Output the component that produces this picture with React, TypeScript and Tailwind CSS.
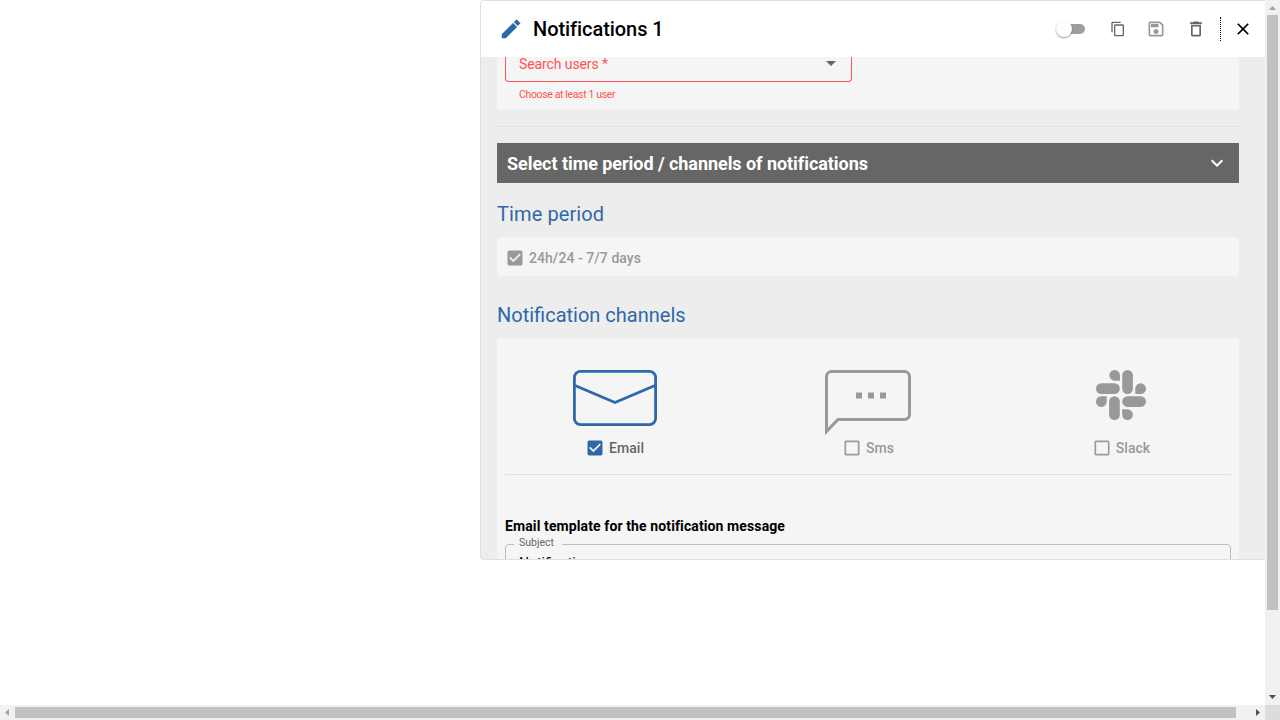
import React from "react";
import {
  MdContentCopy,
  MdOutlineSave,
  MdDeleteOutline,
  MdClose,
  MdArrowDropDown,
  MdExpandMore,
  MdCheckBox,
  MdCheckBoxOutlineBlank,
} from "react-icons/md";

function Header() {
  return (
    <header className="flex h-14 shrink-0 items-center bg-white pl-5">
      <svg className="size-6 -ml-0.5 text-[#2e68aa]" viewBox="0 0 24 24" fill="currentColor" stroke="currentColor" strokeWidth="0.5">
        <path d="M20.710 7.040c.390-.390.390-1.040 0-1.410l-2.340-2.340c-.370-.390-1.020-.390-1.410 0l-1.840 1.830 3.750 3.750M3 17.250V21h3.750L17.810 9.930l-3.750-3.750L3 17.250z" />
      </svg>
      <h1 className="ml-2.5 grow text-[20px] leading-8 font-medium tracking-[-0.06px] whitespace-nowrap text-black">
        Notifications 1
      </h1>
      <div className="flex w-8 items-center">
        <div className="z-10 size-4 shrink-0 rounded-full bg-[#fefefe] shadow-[0_1px_2px_rgba(0,0,0,0.4)]" />
        <div className="-ml-3 h-2.5 w-[25px] rounded-full bg-[#9e9e9e]" />
      </div>
      <MdContentCopy className="ml-[22px] size-4 text-[#666666]" />
      <MdOutlineSave className="ml-5 size-5 text-[#999999]" />
      <MdDeleteOutline className="ml-5 size-5 text-[#666666]" />
      <div className="ml-[14px] h-6 w-px border-l border-dotted border-black" />
      <MdClose className="mr-3 ml-3 size-5 text-black" />
    </header>
  );
}

function UserCard() {
  return (
    <section className="h-[53px] rounded-b bg-[#f5f5f5] px-2">
      <div className="flex h-[25px] w-[347px] justify-between rounded-b border border-t-0 border-[#ff5252] pr-2 pl-[13px]">
        <span className="-mt-[3px] text-[14px] leading-5 tracking-[-0.1px] text-[#ff5252]">Search users *</span>
        <MdArrowDropDown className="-mt-[6px] size-6 text-[#666666]" />
      </div>
      <p className="mt-[5px] pl-[14px] text-[10.5px] leading-4 tracking-[-0.36px] text-[#ff5252]">
        Choose at least 1 user
      </p>
    </section>
  );
}

function Check({ label, checked, box, text }: { label: string; checked?: boolean; box: string; text: string }) {
  const Icon = checked ? MdCheckBox : MdCheckBoxOutlineBlank;
  return (
    <label className="flex items-center gap-1">
      <Icon className={"size-5 shrink-0 " + box} />
      <span className={"text-[14px] leading-5 font-medium tracking-[0.06px] whitespace-nowrap " + text}>{label}</span>
    </label>
  );
}

function EnvelopeIcon() {
  return (
    <svg className="h-14 w-[84px]" viewBox="0 0 84 56" fill="none" stroke="#2e68aa" strokeWidth="2.8">
      <rect x="1.4" y="1.4" width="81.200" height="53.200" rx="6" />
      <path d="M2 15.500 42 32.500 82 15.500" />
    </svg>
  );
}

function SmsIcon() {
  return (
    <svg className="h-[66px] w-[86px]" viewBox="0 0 86 66" fill="none">
      <path
        d="M1.500 61.500V6.500a5 5 0 0 1 5-5h73a5 5 0 0 1 5 5V44.500a5 5 0 0 1-5 5H13Z"
        stroke="#999999"
        strokeWidth="3"
      />
      <path d="M31 22.500h6v6h-6zM43 22.500h6v6h-6zM55 22.500h6v6h-6z" fill="#999999" />
    </svg>
  );
}

function SlackIcon() {
  return (
    <svg className="size-[50px]" viewBox="0 0 50 50" fill="#999999">
      <path d="M24 10.700h-5.400a5.350 5.350 0 1 1 5.400-5.350z" />
      <rect x="0" y="13.300" width="23.800" height="10.700" rx="5.350" />
      <rect x="26.200" y="0" width="10.700" height="24" rx="5.350" />
      <path d="M39.300 24v-5.400a5.350 5.350 0 1 1 5.350 5.400z" />
      <path d="M10.700 26.200v5.200a5.350 5.350 0 1 1-5.350-5.200z" />
      <rect x="13.100" y="26.200" width="10.700" height="23.800" rx="5.350" />
      <rect x="26.200" y="26.200" width="23.800" height="10.700" rx="5.350" />
      <path d="M26.200 39.300h5.400a5.350 5.350 0 1 1-5.400 5.350z" />
    </svg>
  );
}

function Channels() {
  return (
    <section className="h-[240px] rounded-t bg-[#f5f5f5] px-2 pt-8">
      <div className="flex h-[105px] border-b border-[#e0e0e0] pl-[68px]">
        <div className="flex w-[84px] flex-col items-center">
          <div className="h-[68px]">
            <EnvelopeIcon />
          </div>
          <div className="-ml-px">
            <Check label="Email" checked box="text-[#2e68aa]" text="text-[#666666]" />
          </div>
        </div>
        <div className="ml-[168px] flex w-[86px] flex-col items-center">
          <div className="h-[68px]">
            <SmsIcon />
          </div>
          <Check label="Sms" box="text-[#999999]" text="text-[#999999]" />
        </div>
        <div className="ml-[180px] flex w-[60px] flex-col items-center">
          <div className="h-[68px]">
            <SlackIcon />
          </div>
          <Check label="Slack" box="text-[#999999]" text="text-[#999999]" />
        </div>
      </div>
      <h3 className="mt-[41px] text-[14px] leading-5 font-bold tracking-[0.11px] text-black">
        Email template for the notification message
      </h3>
      <fieldset className="mt-0.5 h-14 rounded border border-[#bdbdbd] px-[8px]">
        <legend className="h-3 w-12 pl-[5px] text-[10.5px] leading-[10px] text-[#666666]">Subject</legend>
        <div className="mt-[3px] pl-[5px] text-[14px] leading-5 text-black">Notification</div>
      </fieldset>
    </section>
  );
}

function VerticalScrollbar() {
  return (
    <div className="flex h-[705px] w-[15px] flex-col items-center bg-[#f1f1f1]">
      <svg className="h-[15px] w-[15px] shrink-0" viewBox="0 0 15 15" fill="#a3a3a3">
        <path d="M4 10h7L7.500 6z" />
      </svg>
      <div className="h-[595px] w-[11px] bg-[#c1c1c1]" />
      <svg className="mt-auto h-[15px] w-[15px] shrink-0" viewBox="0 0 15 15" fill="#505050">
        <path d="M4 5h7L7.500 9z" />
      </svg>
    </div>
  );
}

function HorizontalScrollbar() {
  return (
    <div className="flex h-[15px] w-[1265px] items-center bg-[#f1f1f1]">
      <svg className="h-[15px] w-[15px] shrink-0" viewBox="0 0 15 15" fill="#a3a3a3">
        <path d="M9 4v7L5 7.500z" />
      </svg>
      <div className="h-[11px] w-[1221px] bg-[#c1c1c1]" />
      <svg className="ml-auto h-[15px] w-[15px] shrink-0" viewBox="0 0 15 15" fill="#505050">
        <path d="M6 4v7L10 7.500z" />
      </svg>
    </div>
  );
}

export default function App() {
  return (
    <div className="h-[720px] w-[1280px] overflow-hidden bg-white font-['Roboto',sans-serif]">
      <div className="flex h-[705px]">
        <main className="flex w-[1265px] justify-end">
          <div className="flex h-[560px] w-[785px] flex-col overflow-hidden rounded-l border border-r-0 border-[#e0e0e0] bg-[#ededed]">
            <Header />
            <div className="min-h-0 grow overflow-hidden pr-[26px] pl-4">
              <UserCard />
              <hr className="mt-4 border-[#e0e0e0]" />
              <div className="mt-4 flex h-10 items-center justify-between bg-[#666666] pr-2.5 pl-2.5 text-white">
                <h2 className="pt-0.5 text-[18px] leading-6 font-bold tracking-[-0.05px]">
                  Select time period / channels of notifications
                </h2>
                <MdExpandMore className="size-6" />
              </div>
              <h2 className="mt-[15px] text-[20px] leading-8 tracking-[0.1px] text-[#2e68aa]">Time period</h2>
              <div className="mt-[7px] flex h-[39px] items-center rounded bg-[#f5f5f5] px-2 pt-[3px]">
                <Check label="24h/24 - 7/7 days" checked box="text-[#999999]" text="text-[#999999]" />
              </div>
              <h2 className="mt-[23px] mb-[7px] text-[20px] leading-8 text-[#2e68aa]">
                Notification channels
              </h2>
              <Channels />
            </div>
          </div>
        </main>
        <VerticalScrollbar />
      </div>
      <div className="flex h-[15px] bg-[#dcdcdc]">
        <HorizontalScrollbar />
      </div>
    </div>
  );
}
